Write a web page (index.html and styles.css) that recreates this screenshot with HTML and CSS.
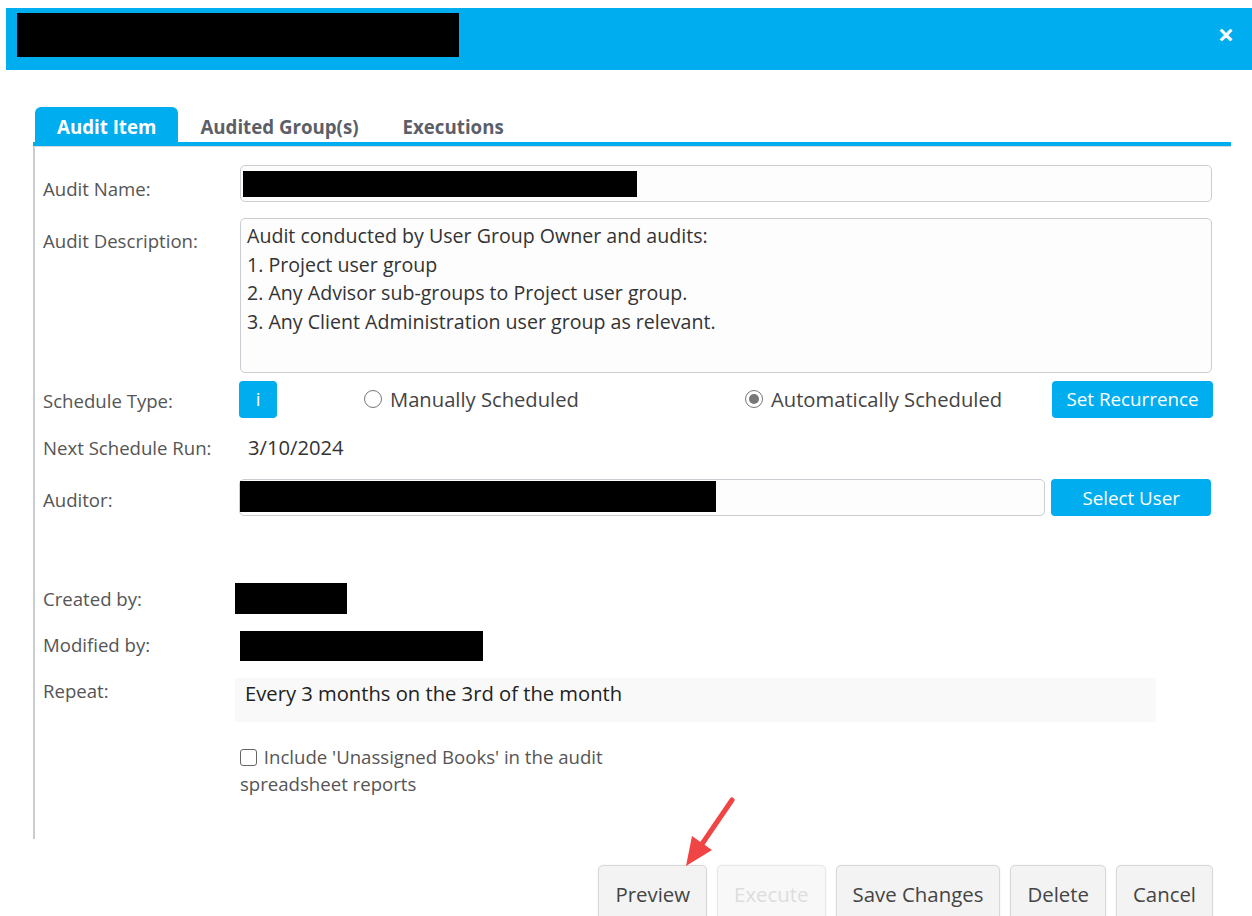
FILE: index.html
```html
<!DOCTYPE html>
<html lang="en">
<head>
<meta charset="utf-8">
<title>Audit Item</title>
<link rel="stylesheet" href="styles.css">
</head>
<body>
<div class="dialog">
  <header class="dialog-header">
    <span class="redacted title-redacted"></span>
    <button class="close" aria-label="Close">&#x2715;</button>
  </header>

  <nav class="tabs">
    <a class="tab active">Audit Item</a>
    <a class="tab">Audited Group(s)</a>
    <a class="tab">Executions</a>
  </nav>
  <div class="tab-rule"></div>

  <section class="panel">
    <div class="row row-name">
      <label class="lbl">Audit Name:</label>
      <div class="field input"><span class="redacted name-redacted"></span></div>
    </div>

    <div class="row row-desc">
      <label class="lbl">Audit Description:</label>
      <div class="field textarea">Audit conducted by User Group Owner and audits:<br>1. Project user group<br>2. Any Advisor sub-groups to Project user group.<br>3. Any Client Administration user group as relevant.</div>
    </div>

    <div class="row row-sched">
      <label class="lbl">Schedule Type:</label>
      <div class="field sched">
        <button class="btn-blue info">i</button>
        <span class="radio-opt manual"><span class="radio"></span>Manually Scheduled</span>
        <span class="radio-opt auto"><span class="radio checked"></span>Automatically Scheduled</span>
        <button class="btn-blue recur">Set Recurrence</button>
      </div>
    </div>

    <div class="row row-next">
      <label class="lbl">Next Schedule Run:</label>
      <div class="field value">3/10/2024</div>
    </div>

    <div class="row row-auditor">
      <label class="lbl">Auditor:</label>
      <div class="field auditor">
        <div class="input auditor-input"><span class="redacted auditor-redacted"></span></div>
        <button class="btn-blue select">Select User</button>
      </div>
    </div>

    <div class="row row-created">
      <label class="lbl">Created by:</label>
      <div class="field"><span class="redacted created-redacted"></span></div>
    </div>

    <div class="row row-modified">
      <label class="lbl">Modified by:</label>
      <div class="field"><span class="redacted modified-redacted"></span></div>
    </div>

    <div class="row row-repeat">
      <label class="lbl">Repeat:</label>
      <div class="field repeat">Every 3 months on the 3rd of the month</div>
    </div>

    <div class="row row-check">
      <span class="lbl"></span>
      <div class="field check"><span class="box"></span> Include 'Unassigned Books' in the audit spreadsheet reports</div>
    </div>
  </section>

  <footer class="actions">
    <button class="btn-gray">Preview</button>
    <button class="btn-gray disabled">Execute</button>
    <button class="btn-gray">Save Changes</button>
    <button class="btn-gray">Delete</button>
    <button class="btn-gray">Cancel</button>
  </footer>

  <svg class="pointer" width="70" height="80" viewBox="0 0 70 80">
    <line x1="60" y1="6" x2="30" y2="50" stroke="#f04545" stroke-width="5" stroke-linecap="round"/>
    <polygon points="14,72 20,42 40,56" fill="#f04545"/>
  </svg>
</div>
</body>
</html>
```

FILE: styles.css
```css
* { box-sizing: border-box; }

body {
  margin: 0;
  background: #fff;
  font-family: "Open Sans", "Noto Sans", sans-serif;
  color: #555;
}

.dialog {
  position: relative;
  width: 1252px;
  height: 916px;
  overflow: hidden;
}

.redacted {
  display: inline-block;
  background: #000;
}

/* title bar */
.dialog-header {
  margin: 8px 0 0 6px;
  height: 62px;
  background: #00adef;
  display: flex;
  align-items: center;
  justify-content: space-between;
  padding: 0 14px 0 11px;
}
.title-redacted { width: 442px; height: 44px; margin-top: -8px; }
.close {
  border: 0;
  background: none;
  color: #fff;
  font-size: 19px;
  font-weight: 700;
  padding: 0;
  width: 24px;
  margin-top: -8px;
  font-family: "DejaVu Sans", sans-serif;
  -webkit-text-stroke: 1px #fff;
}

/* tabs */
.tabs {
  display: flex;
  margin: 37px 0 0 35px;
  height: 35px;
  align-items: stretch;
}
.tab {
  display: flex;
  align-items: center;
  font-size: 18.7px;
  font-weight: 700;
  color: #5b6068;
  padding: 4px 22px 0 22px;
  border-radius: 6px 6px 0 0;
}
.tab.active {
  background: #00adef;
  color: #fff;
}
.tab-rule {
  margin-left: 33px;
  width: 1198px;
  height: 5px;
  background: #00adef;
  border-bottom: 1px solid #d5d8dc;
}

/* form panel */
.panel {
  margin-left: 33px;
  width: 1198px;
  height: 692px;
  border-left: 2px solid #c9cdd2;
  padding: 18px 0 0 8px;
  display: flex;
  flex-direction: column;
}
.row {
  display: flex;
}
.lbl {
  width: 197px;
  flex: none;
  font-size: 18.6px;
  color: #555;
  white-space: nowrap;
}
.field {
  flex: none;
  width: 972px;
}

.input {
  height: 37px;
  border: 1px solid #c9cdd2;
  border-radius: 5px;
  background: #fdfdfd;
  padding: 5px 0 0 2px;
}
.row-name .lbl { padding-top: 11px; }
.name-redacted { width: 394px; height: 26px; }

.row-desc { margin-top: 16px; }
.row-desc .lbl { padding-top: 10px; }
.textarea {
  height: 155px;
  border: 1px solid #c9cdd2;
  border-radius: 5px;
  background: #fdfdfd;
  padding: 3px 0 0 6px;
  font-size: 19.6px;
  line-height: 28.5px;
  color: #333;
}

.row-sched { margin-top: 7px; align-items: center; height: 38px; }
.row-sched .lbl { padding-top: 2px; }
.sched {
  display: flex;
  align-items: center;
  margin-left: -1px;
}
.btn-blue {
  border: 0;
  background: #00adef;
  color: #fff;
  font-family: inherit;
  font-size: 18.8px;
  border-radius: 4px;
  height: 37px;
  padding: 0;
}
.info { width: 38px; }
.radio-opt {
  display: flex;
  align-items: center;
  font-size: 20.2px;
  color: #444;
  white-space: nowrap;
}
.manual { margin-left: 87px; width: 381px; }
.radio {
  width: 18px;
  height: 18px;
  border: 1.5px solid #777;
  border-radius: 50%;
  margin-right: 8px;
  position: relative;
  background: #fff;
  flex: none;
}
.radio.checked::after {
  content: "";
  position: absolute;
  inset: 3px;
  border-radius: 50%;
  background: #777;
}
.recur { margin-left: auto; width: 161px; margin-right: -2px; }

.row-next { margin-top: 12px; height: 34px; align-items: center; }
.value { font-size: 20.2px; color: #333; padding-left: 8px; }

.row-auditor { margin-top: 15px; align-items: center; }
.row-auditor .lbl { padding-top: 4px; }
.auditor { display: flex; margin-left: -1px; gap: 6px; }
.auditor-input { width: 808px; padding: 1px 0 0 0; }
.auditor-redacted { width: 476px; height: 31px; }
.select { width: 160px; }

.row-created { margin-top: 67px; }
.row-created .lbl { padding-top: 3px; }
.created-redacted { width: 112px; height: 31px; margin-left: -5px; }

.row-modified { margin-top: 12px; }
.row-modified .lbl { padding-top: 1px; }
.modified-redacted { width: 243px; height: 30px; }

.row-repeat { margin-top: 12px; }
.row-repeat .lbl { padding-top: 0; }
.repeat {
  width: 921px;
  height: 44px;
  margin-left: -5px;
  background: #f9f9f9;
  padding: 0 0 0 10px;
  font-size: 20.2px;
  color: #222;
  line-height: 30px;
}

.row-check { margin-top: 21px; }
.check {
  width: 400px;
  font-size: 18.6px;
  line-height: 27px;
  color: #555;
}
.box {
  display: inline-block;
  width: 17px;
  height: 17px;
  border: 1.5px solid #666;
  border-radius: 3px;
  vertical-align: -2px;
  margin-right: 2px;
}

/* footer buttons */
.actions {
  display: flex;
  justify-content: flex-end;
  gap: 10px;
  margin-top: 26px;
  width: 1213px;
}
.btn-gray {
  height: 60px;
  border: 1px solid #d8d8d8;
  border-radius: 5px;
  background: #f3f3f3;
  font-family: inherit;
  font-size: 20.4px;
  color: #444;
  padding: 0 16px 3px;
  box-shadow: 0 0 2px rgba(0,0,0,0.08);
}
.btn-gray.disabled { color: #ddd; background: #f8f8f8; border-color: #e8e8e8; }

/* annotation arrow */
.pointer {
  position: absolute;
  left: 672px;
  top: 794px;
}
```
